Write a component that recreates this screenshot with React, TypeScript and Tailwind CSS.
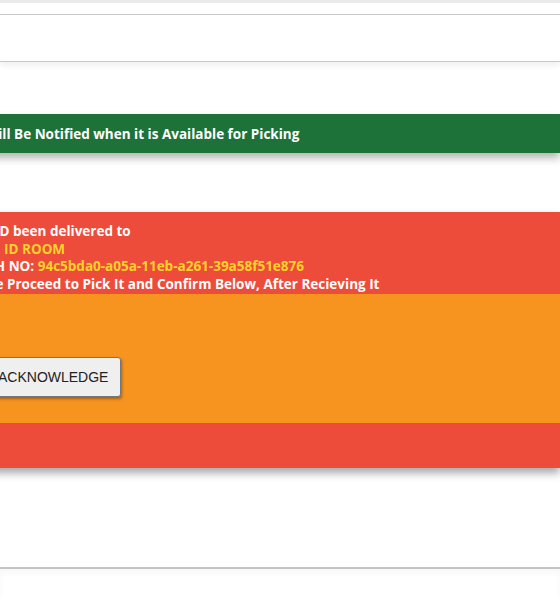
const font = { fontFamily: "'Open Sans', sans-serif" };

const App = () => {
  return (
    <div className="w-[560px] h-[600px] overflow-hidden bg-white" style={font}>
      <div className="h-[3px] bg-[#ebebeb]" />
      <div className="h-[11px]" />
      <div className="h-[48px] border-t border-b border-[#c9c9c9] bg-white shadow-[0_4px_6px_rgba(0,0,0,0.06)]" />
      <div className="h-[52px]" />

      <div className="-ml-[40px] w-[600px]">
        <div className="h-[39px] bg-[#1d723a] flex items-center pl-[-4px] shadow-[0_5px_8px_rgba(0,0,0,0.3)]">
          <span className="text-white font-bold text-[13.5px] -ml-[4px] pt-[2px]">You Will Be Notified when it is Available for Picking</span>
        </div>

        <div className="h-[59px]" />

        <div className="shadow-[0_5px_8px_rgba(0,0,0,0.35)]">
          <div className="bg-[#ed4c3a] pt-[11px] pb-[1px] text-white font-bold text-[13.5px] leading-[17.5px]">
            <div className="pl-[0px]">Item ID been delivered to</div>
            <div className="pl-[44px] text-[#ffd22b]">ID ROOM</div>
            <div className="pl-[0px]">BATCH NO: <span className="text-[#ffd22b]">94c5bda0-a05a-11eb-a261-39a58f51e876</span></div>
            <div className="pl-[0px]">Please Proceed to Pick It and Confirm Below, After Recieving It</div>
          </div>
          <div className="bg-[#f7931f] h-[129px] pt-[63px] pl-[25px]">
            <button className="h-[40px] px-[12px] bg-[#efefef] border border-[#767676] rounded-[3px] shadow-[1px_2px_3px_rgba(0,0,0,0.35)] text-[14px] text-[#222]" style={{ fontFamily: "'Liberation Sans', Arial, sans-serif" }}>
              ACKNOWLEDGE
            </button>
          </div>
          <div className="bg-[#ed4c3a] h-[45px]" />
        </div>
      </div>

      <div className="h-[99px]" />
      <div className="border-t-2 border-[#c4c4c4] h-[30px] shadow-[inset_0_4px_6px_rgba(0,0,0,0.03)]" />
    </div>
  );
};

export default App;
